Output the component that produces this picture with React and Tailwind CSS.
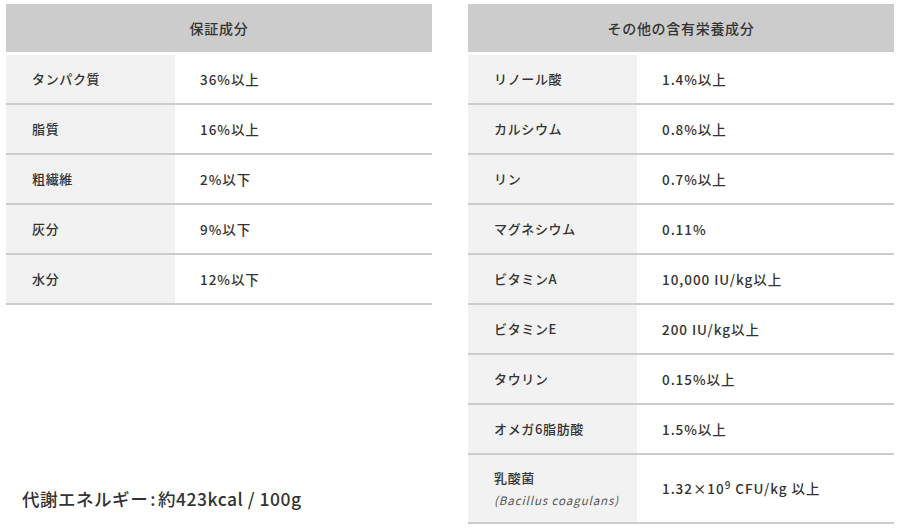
import React from 'react';

const guaranteed = [
  { name: 'タンパク質', value: '36%以上' },
  { name: '脂質', value: '16%以上' },
  { name: '粗繊維', value: '2%以下' },
  { name: '灰分', value: '9%以下' },
  { name: '水分', value: '12%以下' },
];

const others = [
  { name: 'リノール酸', value: '1.4%以上' },
  { name: 'カルシウム', value: '0.8%以上' },
  { name: 'リン', value: '0.7%以上' },
  { name: 'マグネシウム', value: '0.11%' },
  { name: 'ビタミンA', value: '10,000 IU/kg以上' },
  { name: 'ビタミンE', value: '200 IU/kg以上' },
  { name: 'タウリン', value: '0.15%以上' },
  { name: 'オメガ6脂肪酸', value: '1.5%以上' },
];

function Row({ name, value, tall }) {
  return (
    <div className={`flex border-b-2 border-[#cccccc] ${tall ? 'h-[69px]' : 'h-[50px]'}`}>
      <div className="w-[169px] shrink-0 bg-[#f2f2f2] pl-[26px] flex flex-col justify-center">{name}</div>
      <div className="flex-1 pl-[25px] flex items-center text-[13.5px] tracking-[0.07em]">{value}</div>
    </div>
  );
}

function Table({ title, children }) {
  return (
    <div>
      <div className="h-[48px] mb-[3px] bg-[#cccccc] flex items-center justify-center text-[14px] tracking-[0.05em]">
        {title}
      </div>
      {children}
    </div>
  );
}

export default function App() {
  return (
    <div
      className="w-[900px] h-[530px] bg-white text-[#333333] text-[13px] font-medium tracking-[0.05em] flex gap-[36px] px-[6px] pt-[4px]"
      style={{ fontFamily: '"Noto Sans CJK JP", "Noto Sans", sans-serif' }}
    >
      <div className="w-[426px] h-[517px] flex flex-col">
        <Table title="保証成分">
          {guaranteed.map(r => <Row key={r.name} {...r} />)}
        </Table>
        <div className="mt-auto pl-[16px] pb-[10px] text-[17.5px] leading-[24px] tracking-[0.03em] text-[#333333]">
          代謝エネルギー<span className="px-[2px]">:</span>約423kcal / 100g
        </div>
      </div>

      <div className="w-[426px]">
        <Table title="その他の含有栄養成分">
          {others.map(r => <Row key={r.name} {...r} />)}
          <Row
            tall
            name={
              <>
                <span>乳酸菌</span>
                <span className="text-[11.5px] italic font-normal text-[#555555] mt-[4px] tracking-[0.08em]">(Bacillus coagulans)</span>
              </>
            }
            value={
              <span>
                1.32×10<sup className="text-[10px]">9</sup> CFU/kg 以上
              </span>
            }
          />
        </Table>
      </div>
    </div>
  );
}
